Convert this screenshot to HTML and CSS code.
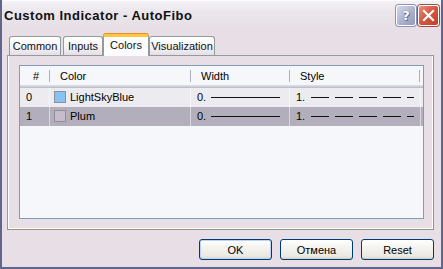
FILE: index.html
```html
<!DOCTYPE html>
<html lang="en">

<head>
    <meta charset="UTF-8">
    <title>Custom Indicator - AutoFibo</title>
    <link rel="stylesheet" href="styles.css">
</head>

<body>
    <div class="window">
        <header class="titlebar">
            <span class="title">Custom Indicator - AutoFibo</span>
            <div class="tb-buttons">
                <span class="tb-btn help">?</span>
                <span class="tb-btn close">
                    <svg width="19" height="19" viewBox="0 0 19 19">
                        <path d="M5 5 L14 14 M14 5 L5 14" stroke="#fff" stroke-width="2.2" stroke-linecap="square" fill="none"/>
                    </svg>
                </span>
            </div>
        </header>

        <nav class="tabs">
            <div class="tab tab-common">Common</div>
            <div class="tab tab-inputs">Inputs</div>
            <div class="tab tab-colors active">Colors</div>
            <div class="tab tab-vis">Visualization</div>
        </nav>

        <section class="panel">
            <div class="list">
                <div class="row head">
                    <div class="cell num">#</div>
                    <div class="cell">Color</div>
                    <div class="cell">Width</div>
                    <div class="cell">Style</div>
                    <div class="cell last"></div>
                </div>
                <div class="row">
                    <div class="cell num">0</div>
                    <div class="cell color"><span class="swatch sky"></span>LightSkyBlue</div>
                    <div class="cell">0.<span class="line solid"></span></div>
                    <div class="cell">1.<span class="line dashed"></span></div>
                    <div class="cell last"></div>
                </div>
                <div class="row selected">
                    <div class="cell num">1</div>
                    <div class="cell color"><span class="swatch plum"></span>Plum</div>
                    <div class="cell">0.<span class="line solid"></span></div>
                    <div class="cell">1.<span class="line dashed"></span></div>
                    <div class="cell last"></div>
                </div>
            </div>
        </section>

        <footer class="buttons">
            <button class="btn default">OK</button>
            <button class="btn">Отмена</button>
            <button class="btn">Reset</button>
        </footer>
    </div>
</body>

</html>
```

FILE: styles.css
```css
* {
    box-sizing: border-box;
}

body {
    margin: 0;
    width: 443px;
    height: 269px;
    overflow: hidden;
    font-family: "Liberation Sans", Arial, sans-serif;
    font-size: 11px;
    color: #000;
}

.window {
    width: 443px;
    height: 269px;
    background-color: #e8dfe6;
    border-left: 2px solid #62668c;
    border-right: 2px solid #62668c;
    border-bottom: 2px solid #62668c;
    display: flex;
    flex-direction: column;
}

/* title bar */
.titlebar {
    height: 28px;
    flex: none;
    display: flex;
    align-items: center;
    justify-content: space-between;
    padding: 0 2px 0 2px;
    background: linear-gradient(#f4f2f6, #ebe6ec 40%, #e6dfe6);
    border-top: 1px solid #fbfafc;
}

.title {
    font-size: 13px;
    font-weight: bold;
    letter-spacing: .5px;
    color: #101010;
    margin-top: 1px;
}

.tb-buttons {
    display: flex;
    gap: 2px;
    margin-top: 1px;
}

.tb-btn {
    width: 21px;
    height: 21px;
    border: 1px solid #fff;
    border-radius: 3px;
    display: flex;
    align-items: center;
    justify-content: center;
}

.help {
    width: 20px;
    background: linear-gradient(135deg, #d6d9ea, #a8aecb 60%, #9199bd);
    color: #fff;
    font-family: "DejaVu Sans", sans-serif;
    font-weight: bold;
    font-size: 13px;
    text-shadow: 0 0 1px #4a5078, 1px 1px 0 #6a7098;
    box-shadow: 0 0 0 1px #8d92b2;
}

.close {
    background: linear-gradient(135deg, #e8907c, #d4543d 50%, #c2402a);
    box-shadow: 0 0 0 1px #a44a44;
}

/* tabs */
.tabs {
    height: 27px;
    flex: none;
    display: flex;
    align-items: flex-end;
    padding-left: 7px;
}

.tab {
    height: 19px;
    line-height: 19px;
    text-align: center;
    border: 1px solid #919b9c;
    border-bottom: none;
    border-radius: 3px 3px 0 0;
    background: linear-gradient(#ffffff, #f6f3f6 55%, #e4dee5);
    margin-right: 2px;
    color: #111;
}

.tab-common {
    width: 52px;
}

.tab-inputs {
    width: 40px;
    margin-right: 0;
}

.tab-colors {
    width: 46px;
    margin-right: 0;
}

.tab-vis {
    width: 66px;
}

.tab.active {
    height: 22px;
    line-height: 17px;
    background: #fcfcfe;
    border-top: 3px solid #ffc73c;
    box-shadow: 0 -1px 0 #e68b2c;
    margin-bottom: -1px;
    position: relative;
    z-index: 1;
}

/* panel */
.panel {
    height: 175px;
    flex: none;
    margin: 0 7px 0 5px;
    border: 1px solid #919b9c;
    border-bottom-color: #8e977f;
    border-right-color: #8e977f;
    box-shadow: inset 1px 0 #fff, inset 0 -1px #fff, inset -1px 0 #fff;
    padding: 9px 9px 10px 11px;
}

.list {
    height: 154px;
    border: 1px solid #7f9db9;
    background-color: #f6f7fb;
}

.row {
    display: grid;
    grid-template-columns: 30px 141px 99px 131px 1fr;
    height: 19px;
    align-items: stretch;
}

.row .cell {
    display: flex;
    align-items: center;
    padding-left: 6px;
    padding-bottom: 1px;
    white-space: nowrap;
    border-right: 1px solid rgba(255, 255, 255, .5);
}

.row .last {
    border-right: none;
}

.row.head {
    height: 22px;
    background: linear-gradient(#f6f7fb 0 19px, #dcdae2 19px 20px, #cfcdd7 20px 21px, #c1bfcb 21px);
}

.head .cell {
    position: relative;
    padding-left: 10px;
    padding-bottom: 0;
    height: 19px;
    border-right: none;
}

.head .cell.num {
    padding-left: 13px;
}

.head .cell::after {
    content: "";
    position: absolute;
    right: 0;
    top: 4px;
    bottom: 3px;
    width: 1px;
    background-color: #aeabb9;
}

.head .cell.last::after {
    display: none;
}

.row.head .cell:nth-child(4)::after {
    right: 1px;
}

.row:nth-child(2) {
    background-color: #ecebf0;
}

.row.selected {
    background-color: #b3aebb;
}

.cell.color {
    padding-left: 4px;
}

.swatch {
    width: 12px;
    height: 12px;
    border: 1px solid #8f8f99;
    margin-right: 4px;
}

.swatch.sky {
    background-color: #87c3f2;
}

.swatch.plum {
    background-color: #c6bccd;
}

.line {
    display: inline-block;
    height: 1px;
    margin-top: 1px;
}

.line.solid {
    width: 69px;
    margin-left: 5px;
    background-color: #111;
}

.line.dashed {
    width: 103px;
    margin-left: 6px;
    background: repeating-linear-gradient(to right, #111 0 18px, transparent 18px 24px);
}

/* buttons */
.buttons {
    flex: 1;
    display: flex;
    justify-content: flex-end;
    align-items: flex-start;
    gap: 8px;
    padding: 9px 7px 0 0;
}

.btn {
    width: 73px;
    height: 21px;
    font-family: "Liberation Sans", Arial, sans-serif;
    font-size: 11px;
    color: #000;
    border: 1px solid #003c74;
    border-radius: 3px;
    background: linear-gradient(#ffffff, #f4f3ef 40%, #ebe9e2 85%, #d8d3c8);
    box-shadow: inset 0 -1px 0 #d6d0c5;
    padding: 0;
}

.btn.default {
    box-shadow: inset 0 0 0 1px #bcd3f5, inset 0 -1px 0 #89aded;
}
```
